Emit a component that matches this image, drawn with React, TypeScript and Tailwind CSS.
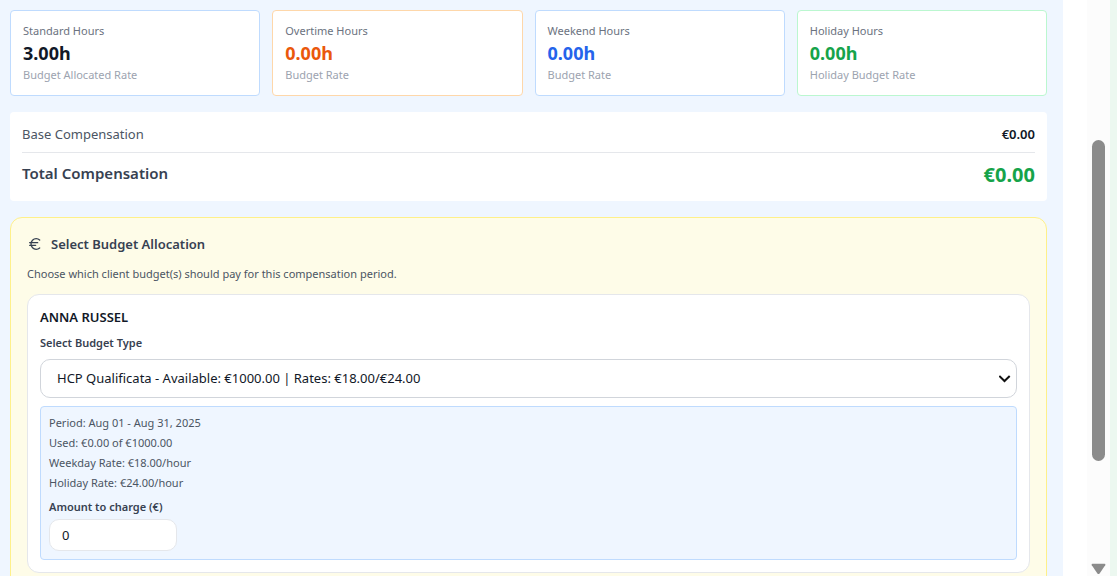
import { useState } from 'react';
import { Euro } from 'lucide-react';

const summaries = [
  { label: 'Standard Hours', value: '3.00h', rate: 'Budget Allocated Rate', border: 'border-[#bfdbfe]', color: 'text-[#111827]' },
  { label: 'Overtime Hours', value: '0.00h', rate: 'Budget Rate', border: 'border-[#fed7aa]', color: 'text-[#ea580c]' },
  { label: 'Weekend Hours', value: '0.00h', rate: 'Budget Rate', border: 'border-[#bfdbfe]', color: 'text-[#2563eb]' },
  { label: 'Holiday Hours', value: '0.00h', rate: 'Holiday Budget Rate', border: 'border-[#bbf7d0]', color: 'text-[#16a34a]' },
];

const budgetDetails = [
  'Period: Aug 01 - Aug 31, 2025',
  'Used: €0.00 of €1000.00',
  'Weekday Rate: €18.00/hour',
  'Holiday Rate: €24.00/hour',
];

function HoursSummary() {
  return (
    <section className="grid grid-cols-4 gap-3">
      {summaries.map((s) => (
        <div key={s.label} className={`rounded border bg-white p-3 ${s.border}`}>
          <p className="text-[11px] leading-4 text-[#6b7280]">{s.label}</p>
          <p className={`text-lg leading-7 font-bold ${s.color}`}>{s.value}</p>
          <p className="text-[11px] leading-4 text-[#9ca3af]">{s.rate}</p>
        </div>
      ))}
    </section>
  );
}

function CompensationTotals() {
  return (
    <section className="rounded bg-white p-3">
      <div className="flex justify-between border-b border-[#e5e7eb] pb-2 text-[13px] leading-5">
        <span className="text-[#4b5563]">Base Compensation</span>
        <span className="font-semibold text-[#111827]">€0.00</span>
      </div>
      <div className="flex items-start justify-between pt-2">
        <span className="text-[15px] leading-6 font-semibold text-[#374151]">Total Compensation</span>
        <span className="text-xl leading-7 font-bold text-[#16a34a]">€0.00</span>
      </div>
    </section>
  );
}

function BudgetAllocation() {
  const [amount, setAmount] = useState('0');
  return (
    <section className="rounded-xl border border-[#fef08a] bg-[#fefce8] p-4">
      <h2 className="flex items-center gap-2 text-[13px] leading-5 font-semibold text-[#374151]">
        <Euro size={16} strokeWidth={2} aria-hidden="true" />
        Select Budget Allocation
      </h2>
      <p className="mt-3 text-[11px] leading-4 text-[#4b5563]">
        Choose which client budget(s) should pay for this compensation period.
      </p>
      <div className="mt-3 rounded-xl border border-[#e5e7eb] bg-white p-3">
        <h3 className="text-[13px] leading-5 font-semibold text-[#111827]">ANNA RUSSEL</h3>
        <label htmlFor="budget-type" className="mt-2 block text-[11px] leading-4 font-semibold text-[#374151]">
          Select Budget Type
        </label>
        <div className="relative mt-2">
          <select
            id="budget-type"
            className="block h-[39px] w-full appearance-none rounded-[10px] border border-[#d1d5db] bg-white px-4 text-[13px] text-[#111827]"
          >
            <option>HCP Qualificata - Available: €1000.00 | Rates: €18.00/€24.00</option>
          </select>
          <svg
            className="pointer-events-none absolute top-4 right-1.5 h-2 w-3"
            viewBox="0 0 12 8"
            fill="none"
            stroke="#111111"
            strokeWidth="2"
            aria-hidden="true"
          >
            <path d="M0.3 1 L5.5 6 L10.7 1" />
          </svg>
        </div>
        <div className="mt-2 rounded border border-[#bfdbfe] bg-[#eff6ff] p-2">
          <ul className="flex flex-col gap-1 text-[11px] leading-4 text-[#4b5563]">
            {budgetDetails.map((d) => (
              <li key={d}>{d}</li>
            ))}
          </ul>
          <label htmlFor="amount" className="mt-2 block text-[11px] leading-4 font-semibold text-[#374151]">
            Amount to charge (€)
          </label>
          <input
            id="amount"
            type="text"
            inputMode="decimal"
            value={amount}
            onChange={(e) => setAmount(e.target.value)}
            className="mt-1 block h-8 w-32 rounded-[10px] border border-[#e5e7eb] bg-white px-3 text-[13px] text-[#111827]"
          />
        </div>
      </div>
    </section>
  );
}

function ScrollTrack() {
  return (
    <div className="flex w-[23px] shrink-0 flex-col items-center bg-[#fcfcfc] pt-[140px]" aria-hidden="true">
      <div className="h-[321px] w-[13px] rounded-full bg-[#8b8b8b]" />
      <svg className="mt-auto mb-px h-3 w-[15px]" viewBox="0 0 15 12" fill="#8b8b8b">
        <path d="M1.6 0.8 H13.4 Q15 0.8 14.2 2.2 L8.6 10.4 Q7.5 11.8 6.4 10.4 L0.8 2.2 Q0 0.8 1.6 0.8 Z" />
      </svg>
    </div>
  );
}

export default function App() {
  return (
    <div className="flex h-screen overflow-hidden bg-[#ecf8f0] pr-[7px] font-['Noto_Sans','Open_Sans',sans-serif]">
      <div className="min-w-0 flex-1 overflow-hidden bg-white pr-6">
        <main className="flex min-h-full flex-col gap-4 bg-[#eff6ff] pt-2.5 pr-4 pb-4 pl-2.5">
          <HoursSummary />
          <CompensationTotals />
          <BudgetAllocation />
        </main>
      </div>
      <ScrollTrack />
    </div>
  );
}
